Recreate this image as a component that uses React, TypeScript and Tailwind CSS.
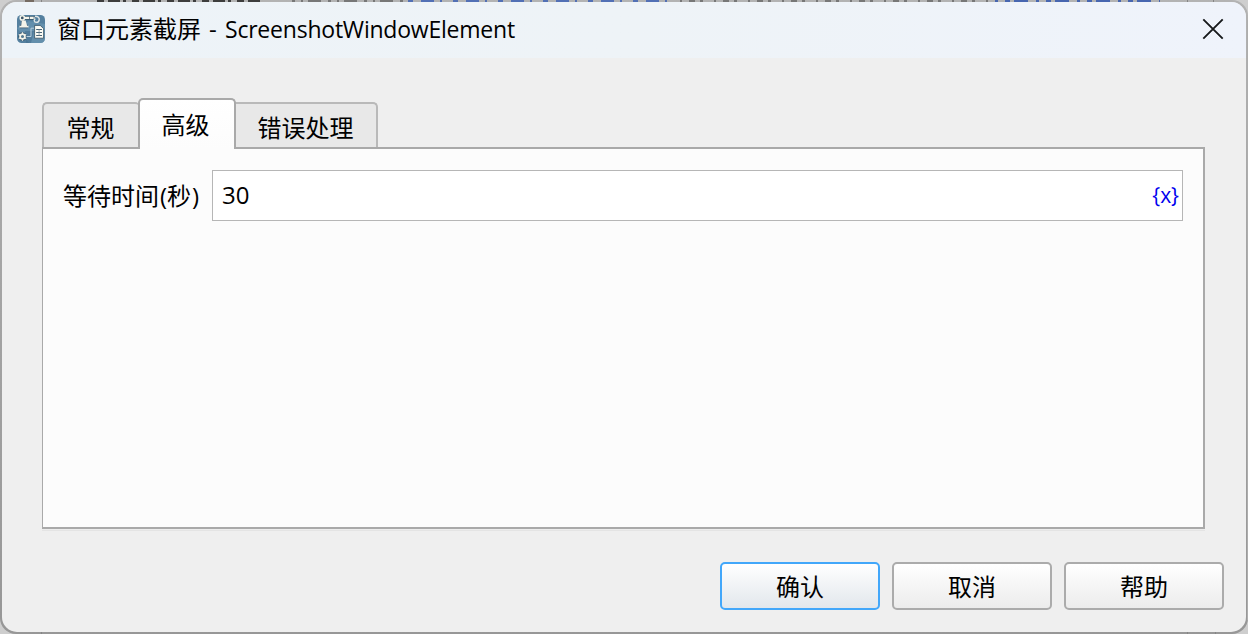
import type { ReactNode } from "react";

function AppIcon() {
  return (
    <svg width="28" height="28" viewBox="0 0 28 28" className="shrink-0">
      <rect width="28" height="28" rx="4.5" fill="#54809f" />
      <path d="M0 13 12 6l16 3v14.5a4.5 4.5 0 0 1-4.5 4.5H12z" fill="#6f9ab7" opacity=".55" />
      <path d="M8 16h9l-3 12H9z" fill="#3f6a8a" opacity=".5" />
      <g stroke="#2c4557" strokeWidth="3.4" fill="none" opacity=".75">
        <path d="M5 3h13M6 4v7M3 11.5h8" />
        <circle cx="5.5" cy="21.5" r="2.6" />
      </g>
      <path d="M8 2.8h10" stroke="#f4f4ea" strokeWidth="2.2" strokeDasharray="4 .7" />
      <circle cx="5.3" cy="2.9" r="2.1" fill="#385267" stroke="#f4f4ea" strokeWidth="1.5" />
      <path d="M4.8 5.5h3.8l1.6 5.4H4.2z" fill="#f4f4ea" />
      <path d="M2.5 11.6h9" stroke="#f4f4ea" strokeWidth="1.7" />
      <path d="M18 1.2c3 0 4.6 1.8 4.2 3.8-.3 1.6-1.6 2.4-3 2.4M18.4 3.8c-2 .8-1.4 3.4.8 3.4" stroke="#dfe6e6" strokeWidth="1.4" fill="none" />
      <path d="M9.5 21.5H14v-8.3h3" stroke="#b9cfdd" strokeWidth="1" fill="none" />
      <path d="M17.6 10.4h5.6l3.4 3.2v9.6h-9z" fill="#fbfbf4" stroke="#344f62" strokeWidth=".8" />
      <path d="M19.2 14.5H25M19.2 17.5H25M19.2 20.5H25" stroke="#476477" strokeWidth="1" />
      <path d="M22.1 14v7" stroke="#6b8494" strokeWidth=".7" />
      <circle cx="5.5" cy="21.5" r="2.4" fill="#547990" stroke="#f4f4ea" strokeWidth="1.7" />
      <path d="M5.5 17.3v1.6M5.5 24.2v1.6M1.8 19.4l1.4.8M7.8 22.8l1.4.8M9.2 19.4l-1.4.8M3.2 22.8l-1.4.8" stroke="#f4f4ea" strokeWidth="1.2" />
    </svg>
  );
}

function Backdrop() {
  return (
    <svg width="1248" height="634" className="absolute inset-0">
      <defs>
        <linearGradient id="side" x1="0" y1="0" x2="0" y2="1">
          <stop offset="0" stopColor="#b3b3b3" />
          <stop offset="0.3" stopColor="#a8a8a8" />
          <stop offset="1" stopColor="#979797" />
        </linearGradient>
      </defs>
      <rect width="1248" height="634" fill="#cecece" />
      <rect width="1248" height="634" rx="16" fill="url(#side)" />
      <rect x="1247" y="20" width="1" height="600" fill="#adadad" />
      <path d="M97 1h166" stroke="#3d3d3d" strokeWidth="2" strokeDasharray="7 4 12 3 3 6" />
      <path d="M25 1h9" stroke="#756b62" strokeWidth="2" />
      <path d="M292 1h112" stroke="#777" strokeWidth="2" strokeDasharray="3 6 2 5 13 7" />
      <path d="M408 1h268" stroke="#5270b5" strokeWidth="2" strokeDasharray="5 8 13 6 2 11" />
      <path d="M680 1h312" stroke="#777" strokeWidth="2" strokeDasharray="2 7 6 5 3 11" />
      <path d="M995 1h165" stroke="#4766b0" strokeWidth="2" strokeDasharray="3 7 5 4 14 8" />
      <path d="M41.5 0v2M1187.5 0v2M1213.5 0v2M41.5 632v2M1187.5 632v2M1215.5 632v2" stroke="#858585" />
    </svg>
  );
}

function TitleBar() {
  return (
    <header className="flex h-14 shrink-0 items-start bg-linear-to-r from-[#edf3f8] via-[#eef3f7] to-[#eff3fb] pl-[15px]">
      <div className="pt-[13px]">
        <AppIcon />
      </div>
      <h1 className="ml-[12px] flex h-14 items-center whitespace-pre text-[24px] leading-[54px]">
        <span className="h-14">窗口元素截屏</span>
        <span className="h-14 w-[24px] pl-[8px]">-</span>
        <span className="h-14 text-[23px] tracking-[-0.22px]">ScreenshotWindowElement</span>
      </h1>
      <button aria-label="关闭" className="ml-auto mr-[22px] mt-[16px]">
        <svg width="22" height="22" viewBox="0 0 22 22" className="block">
          <path d="M1.3 1.3 20.7 20.7M20.7 1.3 1.3 20.7" stroke="#17191b" strokeWidth="1.9" />
        </svg>
      </button>
    </header>
  );
}

function Tab({ children, className }: { children: ReactNode; className: string }) {
  return (
    <button
      role="tab"
      className={`flex justify-center rounded-t-[5px] border-2 border-b-0 text-[24px] ${className}`}
    >
      {children}
    </button>
  );
}

function DialogButton({ children, className }: { children: ReactNode; className: string }) {
  return (
    <button
      className={`h-12 w-[160px] rounded-[5px] border-2 bg-linear-to-b pt-px text-[24px] leading-[44px] ${className}`}
    >
      {children}
    </button>
  );
}

export default function App() {
  return (
    <div className="relative h-[634px] w-[1248px] overflow-hidden p-[2px] font-['Open_Sans','Noto_Sans_CJK_SC',sans-serif] text-black">
      <Backdrop />
      <div className="relative flex h-[630px] w-[1244px] flex-col overflow-hidden rounded-[15px] bg-[#efefef]">
        <TitleBar />
        <main className="flex flex-1 flex-col pl-10 pt-10">
          <div role="tablist" className="z-10 flex h-[51px] items-end">
            <Tab className="mb-[2px] h-[45px] w-[98px] border-r-0 border-[#b9b9b9] bg-[#e8e8e8] pr-[3px] leading-[47px]">常规</Tab>
            <Tab className="z-10 -ml-[2px] h-[51px] w-[98px] border-[#a9a9a9] bg-linear-to-b from-white to-[#fcfcfc] pr-[3px] leading-[50px]">高级</Tab>
            <Tab className="-ml-[2px] mb-[2px] h-[45px] w-[144px] rounded-tl-none border-l-0 border-[#b9b9b9] bg-[#e8e8e8] pl-[1px] leading-[47px]">错误处理</Tab>
          </div>
          <section className="-mt-[2px] h-[382px] w-[1163px] border-2 border-l border-[#a9a9a9] bg-[#fcfcfc] pl-[20px] pt-[21px] shadow-[0_1px_0_#ededed,0_2px_0_#e4e4e4]">
            <div className="flex">
              <label className="flex w-[149px] whitespace-nowrap text-[24px] leading-[52px]">
                <span>等待时间</span>
                <span className="pl-px">(</span>
                <span>秒</span>
                <span className="pl-px">)</span>
              </label>
              <div className="flex h-[51px] w-[971px] items-center justify-between border border-[#b6b6b6] bg-white pl-[9px] pr-[3px]">
                <span className="pb-[2px] text-[24px] leading-[47px]">30</span>
                <span className="text-[21px] leading-[49px] text-[#0000ee]">{"{x}"}</span>
              </div>
            </div>
          </section>
          <footer className="mt-[33px] flex justify-end gap-3 pr-[22px]">
            <DialogButton className="border-[#42a7fa] from-white to-[#e2e7ec]">确认</DialogButton>
            <DialogButton className="border-[#ababab] from-white to-[#ececec]">取消</DialogButton>
            <DialogButton className="border-[#ababab] from-white to-[#ececec]">帮助</DialogButton>
          </footer>
        </main>
      </div>
    </div>
  );
}
